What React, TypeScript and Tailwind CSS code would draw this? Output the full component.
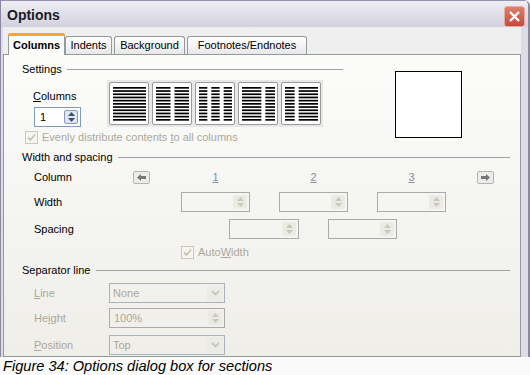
import React from "react";

const DIS = "text-[#aca899]";

function ColIcon({ cols }: { cols: number[] }) {
  // cols: relative widths of the columns
  const total = cols.reduce((a, b) => a + b, 0);
  const inner = 33;
  const gap = 4;
  const usable = inner - gap * (cols.length - 1);
  let x = 3;
  const rects: React.ReactElement[] = [];
  cols.forEach((c, ci) => {
    const w = (usable * c) / total;
    for (let i = 0; i < 11; i++) {
      rects.push(
        <rect key={`${ci}-${i}`} x={x} y={4 + i * 3.2} width={w} height={1.7} fill="#000" />
      );
    }
    x += w + gap;
  });
  return (
    <div className="w-[40px] h-[43px] bg-white border border-[#9a9a9a] rounded-[2px]">
      <svg width="38" height="41" viewBox="0 0 38 41">
        {rects}
      </svg>
    </div>
  );
}

function Check({ label }: { label: React.ReactNode }) {
  return (
    <div className="flex items-center">
      <div className="w-[13px] h-[13px] border border-[#cac8bb] bg-[#f6f5f0] flex items-center justify-center">
        <svg width="9" height="9" viewBox="0 0 9 9">
          <path d="M1 4.5 L3.5 7 L8 1.5" stroke="#c6c4b7" strokeWidth="1.8" fill="none" />
        </svg>
      </div>
      <span className={`ml-[4px] leading-[13px] ${DIS}`}>{label}</span>
    </div>
  );
}

function SpinArrows({ enabled }: { enabled?: boolean }) {
  const c = enabled ? "#3c4e6e" : "#c8c8c0";
  return (
    <div
      className={`w-[14px] h-[14px] mr-[2px] rounded-[2px] flex flex-col items-center justify-center gap-[2px] ${
        enabled ? "bg-[#dfe6ef] border border-[#8b9ab3]" : "bg-[#ebebe4]"
      }`}
    >
      <svg width="7" height="4" viewBox="0 0 7 4">
        <path d="M0 4 L3.5 0 L7 4 Z" fill={c} />
      </svg>
      <svg width="7" height="4" viewBox="0 0 7 4">
        <path d="M0 0 L3.5 4 L7 0 Z" fill={c} />
      </svg>
    </div>
  );
}

function DisSpin({ w, value }: { w: string; value?: string }) {
  return (
    <div className={`${w} h-[20px] border border-[#ababab] flex items-center justify-between`}>
      <span className={`pl-[4px] ${DIS}`}>{value}</span>
      <SpinArrows />
    </div>
  );
}

function DisSelect({ value }: { value: string }) {
  return (
    <div className="w-[116px] h-[20px] border border-[#a9b1ba] flex items-center justify-between">
      <span className={`pl-[3px] ${DIS}`}>{value}</span>
      <div className="w-[16px] h-[16px] mr-[1px] bg-[#ecece6] flex items-center justify-center">
        <svg width="9" height="6" viewBox="0 0 9 6">
          <path d="M1 1 L4.5 4.5 L8 1" stroke="#c6c6bd" strokeWidth="1.8" fill="none" />
        </svg>
      </div>
    </div>
  );
}

function NavBtn({ dir }: { dir: "left" | "right" }) {
  return (
    <div className="w-[17px] h-[13px] border border-[#b4b4b4] rounded-[2px] bg-[#ececea] flex items-center justify-center">
      <svg width="9" height="7" viewBox="0 0 9 7">
        {dir === "left" ? (
          <path d="M0 3.5 L4 0 L4 2 L9 2 L9 5 L4 5 L4 7 Z" fill="#777" />
        ) : (
          <path d="M9 3.5 L5 0 L5 2 L0 2 L0 5 L5 5 L5 7 Z" fill="#777" />
        )}
      </svg>
    </div>
  );
}

function Header({ title, pr = "pr-[10px]" }: { title: string; pr?: string }) {
  return (
    <div className={`flex items-center pl-[18px] leading-[13px] ${pr}`}>
      <span className="text-black">{title}</span>
      <div className="flex-1 ml-[5px] h-px bg-[#a0a0a6]" />
    </div>
  );
}

export default function App() {
  return (
    <div
      className="w-[530px] h-[375px] bg-[#fafafa] flex flex-col text-[11px] text-black"
      style={{ fontFamily: '"Liberation Sans", Arial, sans-serif' }}
    >
      {/* dialog */}
      <div className="h-[357px] flex flex-col border-l border-r-2 border-[#8a88a3] bg-[#dedde7] rounded-tr-[6px] overflow-hidden">
        {/* title bar */}
        <div className="h-[27px] flex items-center justify-between bg-linear-to-b from-[#efeef4] to-[#d2d1de] border-t border-[#9493aa]">
          <span className="pl-[6px] pt-[2px] text-[14px] font-bold text-[#1b1b26]">Options</span>
          <div className="w-[21px] h-[21px] mr-[3px] mt-[4px] rounded-[3px] border border-[#e9aaa0] bg-linear-to-b from-[#de7f70] to-[#c24a3d] flex items-center justify-center">
            <svg width="13" height="13" viewBox="0 0 13 13">
              <path d="M2 2 L11 11 M11 2 L2 11" stroke="#fff" strokeWidth="2.4" />
            </svg>
          </div>
        </div>

        {/* body */}
        <div className="flex-1 flex flex-col ml-[2px] mr-[7px] pt-[6px] bg-[#efeff0]">
          {/* tabs */}
          <div className="flex items-end h-[21px] pl-[5px]">
            <div className="relative z-10 -mb-px w-[57px] h-[22px] border-x border-[#919b9c] bg-[#fcfcfb] rounded-t-[3px] flex flex-col">
              <div className="h-[3px] bg-[#f4a53a] rounded-t-[3px] -mx-px" />
              <div className="flex-1 flex items-center justify-center font-bold">Columns</div>
            </div>
            <div className="w-[47px] h-[18px] border border-b-0 border-[#919b9c] rounded-t-[3px] bg-linear-to-b from-white to-[#e8e8ea] flex items-center justify-center">
              Indents
            </div>
            <div className="ml-[2px] w-[71px] h-[18px] border border-b-0 border-[#919b9c] rounded-t-[3px] bg-linear-to-b from-white to-[#e8e8ea] flex items-center justify-center">
              Background
            </div>
            <div className="ml-[2px] w-[120px] h-[18px] border border-b-0 border-[#919b9c] rounded-t-[3px] bg-linear-to-b from-white to-[#e8e8ea] flex items-center justify-center">
              Footnotes/Endnotes
            </div>
          </div>

          {/* panel */}
          <div className="flex-1 border border-[#919b9c] bg-linear-to-b from-[#fcfcfb] to-[#efeee9] flex flex-col">
            {/* Settings */}
            <div className="flex mt-[8px]">
              <div className="w-[339px] flex flex-col">
                <Header title="Settings" pr="pr-0" />
                <div className="flex items-start mt-[4px] pl-[29px]">
                  <div className="flex flex-col">
                    <span className="mt-[10px] leading-[13px]">
                      <u>C</u>olumns
                    </span>
                    <div className="mt-[4px] ml-[1px] w-[47px] h-[20px] border border-[#7f9db9] bg-white flex items-center justify-between">
                      <span className="pl-[5px]">1</span>
                      <SpinArrows enabled />
                    </div>
                  </div>
                  <div className="ml-[26px] p-[2px] bg-[#e7e7e6] flex gap-[3px]">
                    <ColIcon cols={[1]} />
                    <ColIcon cols={[1, 1]} />
                    <ColIcon cols={[1, 1, 1]} />
                    <ColIcon cols={[2, 1]} />
                    <ColIcon cols={[1, 2]} />
                  </div>
                </div>
                <div className="mt-[4px] pl-[21px]">
                  <Check
                    label={
                      <>
                        Evenly distribute contents <u>t</u>o all columns
                      </>
                    }
                  />
                </div>
              </div>
              <div className="ml-[52px] mt-[8px] w-[67px] h-[67px] border border-black bg-white" />
            </div>

            {/* Width and spacing */}
            <div className="mt-[7px]">
              <Header title="Width and spacing" />
            </div>
            <div className="flex items-center h-[13px] mt-[7px] pl-[30px]">
              <span className="w-[99px]">Column</span>
              <NavBtn dir="left" />
              <div className="ml-[31px] flex gap-[29px]">
                {["1", "2", "3"].map((n) => (
                  <span key={n} className="w-[69px] text-center text-[#8b8a9e] underline">
                    {n}
                  </span>
                ))}
              </div>
              <div className="ml-[31px]">
                <NavBtn dir="right" />
              </div>
            </div>
            <div className="flex items-center h-[20px] mt-[8px] pl-[30px]">
              <span className="w-[147px]">Width</span>
              <div className="flex gap-[29px]">
                <DisSpin w="w-[69px]" />
                <DisSpin w="w-[69px]" />
                <DisSpin w="w-[69px]" />
              </div>
            </div>
            <div className="flex items-center h-[20px] mt-[7px] pl-[30px]">
              <span className="w-[195px]">Spacing</span>
              <div className="flex gap-[29px]">
                <DisSpin w="w-[70px]" />
                <DisSpin w="w-[69px]" />
              </div>
            </div>
            <div className="mt-[7px] pl-[177px]">
              <Check
                label={
                  <>
                    Auto<u>W</u>idth
                  </>
                }
              />
            </div>

            {/* Separator line */}
            <div className="mt-[5px]">
              <Header title="Separator line" />
            </div>
            <div className="flex items-center h-[20px] mt-[6px] pl-[30px]">
              <span className={`w-[75px] ${DIS}`}>
                <u>L</u>ine
              </span>
              <DisSelect value="None" />
            </div>
            <div className="flex items-center h-[20px] mt-[5px] pl-[30px]">
              <span className={`w-[75px] ${DIS}`}>
                He<u>i</u>ght
              </span>
              <div className="w-[116px]">
                <DisSpin w="w-[116px]" value="100%" />
              </div>
            </div>
            <div className="flex items-center h-[20px] mt-[7px] pl-[30px]">
              <span className={`w-[75px] ${DIS}`}>
                <u>P</u>osition
              </span>
              <DisSelect value="Top" />
            </div>
          </div>
        </div>
      </div>

      {/* caption */}
      <div className="flex-1 flex items-center pl-[3px] text-[14.6px] italic text-black leading-none">
        Figure 34: Options dialog box for sections
      </div>
    </div>
  );
}
